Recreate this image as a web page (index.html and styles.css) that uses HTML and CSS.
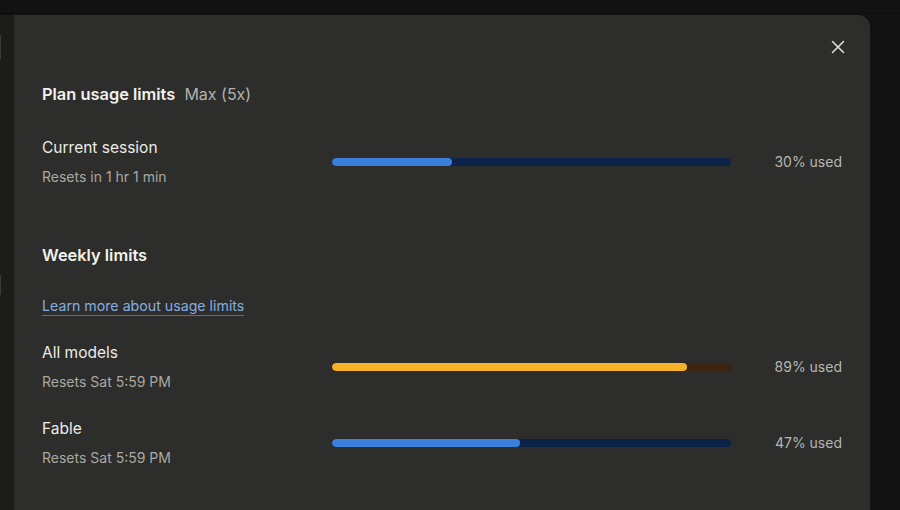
FILE: index.html
```html
<!DOCTYPE html>
<html>
<head>
<title>Usage</title>
<link rel="stylesheet" href="styles.css">
</head>
<body>

<div class="page">
  <div class="side">
    <div class="notch notch-top"></div>
    <div class="notch notch-mid"></div>
  </div>

  <div class="modal">
    <div class="modal-top">
      <button class="close" aria-label="Close">
        <svg width="14" height="14" viewBox="0 0 14 14" fill="none" stroke="#e4e3de" stroke-width="1.5" stroke-linecap="round">
          <path d="M1.5 1.5l11 11M12.5 1.5l-11 11"/>
        </svg>
      </button>
    </div>

    <div class="modal-body">
      <h2 class="heading">Plan usage limits <span class="plan">Max (5x)</span></h2>

      <div class="usage-row first">
        <div class="label">
          <div class="title">Current session</div>
          <div class="sub">Resets in 1 hr 1 min</div>
        </div>
        <div class="track blue"><div class="fill" style="width: 30%"></div></div>
        <div class="pct">30% used</div>
      </div>

      <h2 class="heading weekly">Weekly limits</h2>
      <a class="learn" href="#">Learn more about usage limits</a>

      <div class="usage-row">
        <div class="label">
          <div class="title">All models</div>
          <div class="sub">Resets Sat 5:59 PM</div>
        </div>
        <div class="track amber"><div class="fill" style="width: 89%"></div></div>
        <div class="pct">89% used</div>
      </div>

      <div class="usage-row">
        <div class="label">
          <div class="title">Fable</div>
          <div class="sub">Resets Sat 5:59 PM</div>
        </div>
        <div class="track blue"><div class="fill" style="width: 47%"></div></div>
        <div class="pct">47% used</div>
      </div>
    </div>
  </div>
</div>

</body>
</html>
```

FILE: styles.css
```css
body {
  margin: 0;
  height: 510px;
  overflow: hidden;
  background: #121212;
  font-family: Inter, "Open Sans", sans-serif;
  color: #ecebe6;
}

/* dimmed app behind the dialog */
.page {
  display: flex;
  height: 497px;
  margin-top: 13px;
  padding-top: 1px;
  border-top: 1px solid #0c0c0c;
  box-sizing: border-box;
}

.side {
  width: 14px;
  background: #1c1c1a;
}

.notch {
  width: 1px;
  background: #3a3a37;
}

.notch-top {
  height: 24px;
  margin-top: 20px;
}

.notch-mid {
  height: 20px;
  margin-top: 216px;
}

.modal {
  width: 856px;
  background: #2d2d2b;
  border-top-right-radius: 12px;
}

.modal-top {
  display: flex;
  justify-content: flex-end;
  padding: 20px 20px 0 0;
}

.close {
  width: 24px;
  height: 24px;
  padding: 0;
  border: none;
  background: none;
  display: flex;
  align-items: center;
  justify-content: center;
  cursor: pointer;
}

.modal-body {
  padding: 23px 28px 0;
}

.heading {
  margin: 0;
  font-size: 16.4px;
  line-height: 24px;
  font-weight: 600;
  color: #f2f1ec;
}

.plan {
  font-size: 16px;
  font-weight: 400;
  color: #b3b2ac;
  margin-left: 5px;
}

.weekly {
  margin-top: 56px;
}

.learn {
  display: inline-block;
  margin-top: 28px;
  font-size: 14.2px;
  line-height: 22px;
  color: #86ade0;
  text-decoration: underline;
  text-decoration-color: #56708f;
  text-underline-offset: 4px;
}

.usage-row {
  display: grid;
  grid-template-columns: 290px 399px 1fr;
  align-items: center;
  margin-top: 24px;
}

.usage-row.first {
  margin-top: 30px;
}

.usage-row + .usage-row {
  margin-top: 25px;
}

.label {
  padding-top: 1px;
}

.title {
  font-size: 15.5px;
  line-height: 22px;
  color: #ecebe6;
}

.sub {
  margin-top: 8px;
  font-size: 14px;
  line-height: 20px;
  color: #a9a8a2;
}

.track {
  height: 8px;
  border-radius: 4px;
  overflow: hidden;
}

.fill {
  height: 100%;
  border-radius: 4px;
}

.track.blue { background: #0c2349; }
.track.blue .fill { background: #3a7fdc; }

.track.amber { background: #3b230f; }
.track.amber .fill { background: #f5b227; }

.pct {
  text-align: right;
  font-size: 14px;
  color: #b7b6b0;
}
```
